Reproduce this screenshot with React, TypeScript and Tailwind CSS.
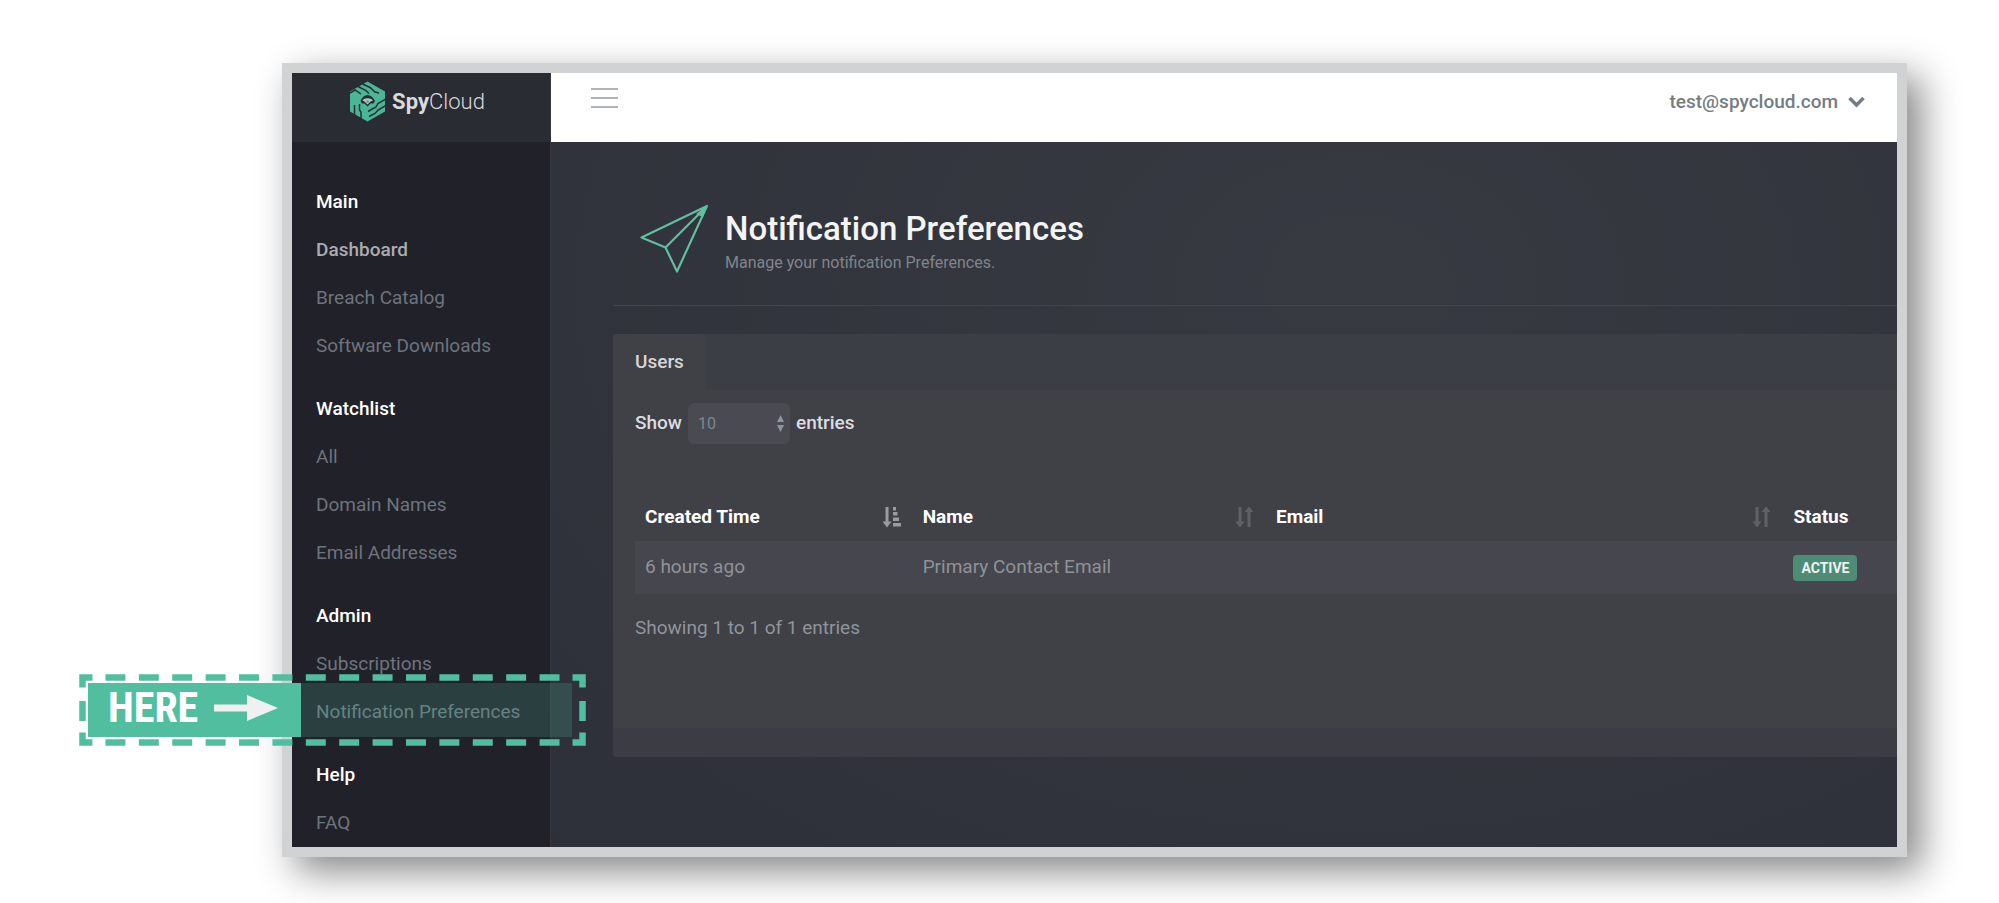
import type { ReactNode } from "react";

const navGroups = [
  {
    title: "Main",
    items: [
      { name: "Dashboard", active: true },
      { name: "Breach Catalog" },
      { name: "Software Downloads" },
    ],
  },
  {
    title: "Watchlist",
    items: [
      { name: "All" },
      { name: "Domain Names" },
      { name: "Email Addresses" },
    ],
  },
  {
    title: "Admin",
    items: [
      { name: "Subscriptions" },
      { name: "Notification Preferences", callout: true },
    ],
  },
  { title: "Help", items: [{ name: "FAQ" }] },
];

function Logo() {
  return (
    <a href="#" className="flex items-center gap-1.5 text-[22px] leading-8 text-[#d9dadc]">
      <svg width="37" height="41" viewBox="0 0 37 41" aria-hidden="true">
        <path d="M18.5 0.5 36 10.5V30.5L18.5 40.5 1 30.5V10.5Z" fill="#47b795" />
        <g fill="none" stroke="#2a2c34" strokeWidth="1.5">
          <path d="M9 5.500 17 9.500 20 12.500" />
          <path d="M13.500 3 21 6.500 26 11 30 12" />
          <path d="M0 12.500 6 9 12 13" />
          <path d="M5.500 24V34" />
          <path d="M10.500 23V29L12 31V38" />
          <path d="M37 18 29 22.500 27 26 19 30.500" />
          <path d="M37 24.500 29 29 26 32.500 20 35.500" />
        </g>
        <path d="M11.500 20C13 16 15.500 14 18.500 14S24 16 26 20L24.500 22.500H21.500L18.500 25.500 15.500 22.500H13Z" fill="#2a2c34" />
        <path d="M13.500 19.500C15.500 16.500 21.500 16.500 24 19.500L21.500 20.500 18.500 23.500 15.500 20.500Z" fill="#b9c4c3" />
        <circle cx="18.500" cy="20.500" r="1.500" fill="#47b795" />
      </svg>
      <span>
        <b className="font-bold">Spy</b>
        <span className="font-light">Cloud</span>
      </span>
    </a>
  );
}

function HereCallout() {
  return (
    <div className="pointer-events-none absolute -top-3.5 right-[-36px] left-[-213px] h-[72px]">
      <svg className="absolute inset-0 h-full w-full" viewBox="0 0 508 72" aria-hidden="true">
        <g fill="none" stroke="#51bf9f" strokeWidth="6.500">
          <path d="M26.500 3.500H482" strokeDasharray="20 13.460" />
          <path d="M26.500 68.500H482" strokeDasharray="20 13.460" />
          <path d="M3.500 27V47M504.500 27V47" />
          <path d="M3.500 13.500V3.500H13.500M494.500 3.500H504.500V13.500M504.500 58.500V68.500H494.500M13.500 68.500H3.500V58.500" />
        </g>
      </svg>
      <div className="flex h-full py-[9px] pr-3.5 pl-[9px]">
        <div className="flex w-[213px] items-center gap-4 bg-[#51bf9f] pb-1 pl-5">
          <span className="font-['Liberation_Sans_Narrow','Roboto_Condensed',Roboto,sans-serif] text-[42px] leading-none font-bold text-white">
            HERE
          </span>
          <svg width="64" height="28" viewBox="0 0 64 28" aria-hidden="true">
            <path d="M0 10.500H33V1L64 14 33 27V17.500H0Z" fill="#f0f0f0" />
          </svg>
        </div>
        <div className="flex-1 bg-[#51bf9f]/20" />
      </div>
    </div>
  );
}

function Sidebar() {
  return (
    <aside className="w-[259px] shrink-0 border-r border-[#36373e] bg-[#212129]">
      <div className="flex h-[69px] items-start justify-center bg-[#2a2c34] pt-2 pr-2">
        <Logo />
      </div>
      <nav className="flex flex-col gap-3.5 pt-[35px]">
        {navGroups.map((group) => (
          <div key={group.title}>
            <h2 className="pl-6 text-[19px] leading-[49px] font-medium text-white">{group.title}</h2>
            <ul>
              {group.items.map((item) => (
                <li key={item.name} className="relative">
                  <a
                    href="#"
                    className={
                      item.active
                        ? "block pl-6 text-[19px] leading-[48px] font-medium text-[#aaacb0]"
                        : "block pl-6 text-[19px] leading-[48px] text-[#6d747c]"
                    }
                  >
                    {item.name}
                  </a>
                  {item.callout && <HereCallout />}
                </li>
              ))}
            </ul>
          </div>
        ))}
      </nav>
    </aside>
  );
}

function SortIcon({ sorted = false }: { sorted?: boolean }) {
  return (
    <svg
      width="19"
      height="22"
      viewBox="0 0 19 22"
      className={sorted ? "text-[#9a9ba0]" : "text-[#606166]"}
      aria-hidden="true"
    >
      <path d="M3.500 1H6.500V15.500H9.500L5 21.500.5 15.500H3.500Z" fill="currentColor" />
      {sorted ? (
        <path d="M11 1H14V4.500H11ZM11 6H15.500V9.500H11ZM11 11.500H17V15H11ZM11 17H19V20.500H11Z" fill="currentColor" />
      ) : (
        <path d="M12.500 21H15.500V6H18.500L14 .5 9.500 6H12.500Z" fill="currentColor" />
      )}
    </svg>
  );
}

function HeadCell({ className, icon, children }: { className?: string; icon?: ReactNode; children: string }) {
  return (
    <th scope="col" className={className}>
      <div className="flex items-center justify-between pr-3 pl-2.5">
        {children}
        {icon}
      </div>
    </th>
  );
}

function UsersPanel() {
  return (
    <section className="mt-7 rounded-l bg-[#404047] text-[19px]">
      <div className="flex rounded-tl bg-[#3c3e45]">
        <button type="button" className="h-14 rounded-t bg-[#404047] px-[22px] font-medium text-[#d5d6d9]">
          Users
        </button>
      </div>

      <div className="flex flex-col pt-[13px] pl-[22px]">
        <label className="flex items-center gap-1.5 font-medium text-[#dcdde0]">
          Show
          <span className="relative">
            <select className="h-[41px] w-[102px] appearance-none rounded-md bg-[#4a4a53] pl-2.5 text-base font-normal text-[#7f868e]">
              <option>10</option>
            </select>
            <svg
              className="pointer-events-none absolute top-3 right-1.5"
              width="7"
              height="17"
              viewBox="0 0 7 17"
              aria-hidden="true"
            >
              <path d="M3.500 0 7 7H0ZM3.500 17 0 10H7Z" fill="#8d949b" />
            </svg>
          </span>
          entries
        </label>

        <table className="mt-[49px] w-full table-fixed text-left">
          <thead>
            <tr className="h-12 text-white">
              <HeadCell className="w-[22%] font-bold" icon={<SortIcon sorted />}>
                Created Time
              </HeadCell>
              <HeadCell className="w-[28%] font-bold" icon={<SortIcon />}>
                Name
              </HeadCell>
              <HeadCell className="w-[41%] font-bold" icon={<SortIcon />}>
                Email
              </HeadCell>
              <HeadCell className="font-bold">Status</HeadCell>
            </tr>
          </thead>
          <tbody>
            <tr className="h-[53px] bg-[#46464e] text-[#8f9298]">
              <td className="pl-2.5">6 hours ago</td>
              <td className="pl-2.5">Primary Contact Email</td>
              <td className="pl-2.5" />
              <td className="pl-2.5">
                <span className="block w-fit rounded-sm bg-[#4f8c75] px-2 text-sm leading-[26px] font-bold text-[#eef3f1]">
                  ACTIVE
                </span>
              </td>
            </tr>
          </tbody>
        </table>

        <p className="mt-5 mb-[86px] leading-7 text-[#8f959b]">Showing 1 to 1 of 1 entries</p>
      </div>

      <div className="h-[29px] rounded-bl bg-[#3b3c44]" />
    </section>
  );
}

export default function App() {
  return (
    <div className="min-h-screen overflow-hidden bg-white pt-[63px] pr-[92px] pb-[46px] pl-[282px] font-[Roboto,sans-serif]">
      <div className="flex border-10 border-[#d0d2d4] shadow-[14px_14px_36px_rgba(0,0,0,0.48)]">
        <Sidebar />

        <div className="flex min-w-0 flex-1 flex-col">
          <header className="flex h-[69px] items-start justify-between bg-white pr-8 pl-10">
            <button type="button" aria-label="Toggle menu" className="mt-[15px] flex flex-col gap-[7px]">
              <span className="h-0.5 w-[27px] bg-[#b0b4b8]" />
              <span className="h-0.5 w-[27px] bg-[#b0b4b8]" />
              <span className="h-0.5 w-[27px] bg-[#b0b4b8]" />
            </button>
            <button type="button" className="mt-[15px] flex items-center gap-2.5 text-[19px] font-medium text-[#757c83]">
              test@spycloud.com
              <svg width="17" height="12" viewBox="0 0 17 12" aria-hidden="true">
                <path d="M1.500 2 8.500 9 15.500 2" fill="none" stroke="currentColor" strokeWidth="3.500" />
              </svg>
            </button>
          </header>

          <main className="flex-1 bg-[radial-gradient(ellipse_at_60%_20%,#383a42,#2d3038)] pl-[62px]">
            <div className="flex gap-4 border-b border-[#41454c] pt-[63px] pb-7 pl-[27px]">
              <svg width="69" height="68" viewBox="0 0 69 68" aria-hidden="true">
                <path
                  d="M67 1 1.500 32.500 25.500 42.500 37 66.500ZM67 1 25.500 42.500"
                  fill="none"
                  stroke="#5fbf9f"
                  strokeWidth="2.200"
                  strokeLinejoin="round"
                />
                <path d="M67 1 56 9 63 12Z" fill="#5fbf9f" />
              </svg>
              <div>
                <h1 className="mt-1 text-[33px] leading-10 font-medium text-[#f4f4f5]">Notification Preferences</h1>
                <p className="text-base leading-7 text-[#80858c]">Manage your notification Preferences.</p>
              </div>
            </div>

            <UsersPanel />
          </main>
        </div>
      </div>
    </div>
  );
}
